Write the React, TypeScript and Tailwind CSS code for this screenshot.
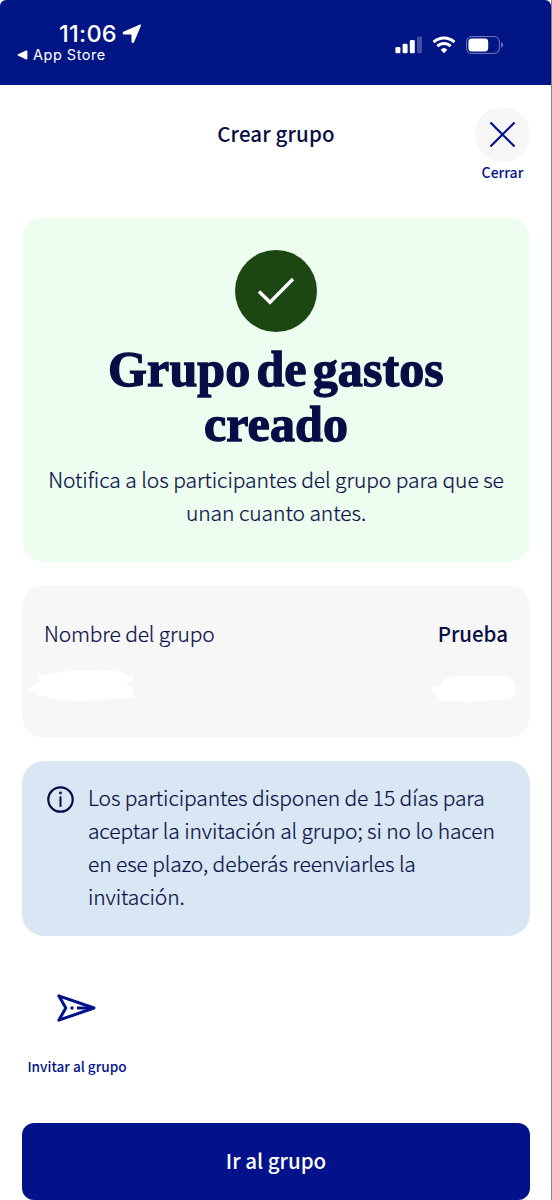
import type { ReactNode } from "react";

function StatusBar() {
    return (
        <div className="flex h-[85px] shrink-0 justify-between rounded-t-[6px] bg-[#021585] font-['Inter',sans-serif] text-white">
            <div className="pt-[21px] pl-[17px]">
                <div className="flex h-[26px] items-center gap-[5px] pl-[42px]">
                    <span className="text-[23.5px] leading-[26px] font-medium tracking-[0.25px]">11:06</span>
                    <svg width="20" height="20" viewBox="0 0 19 19" fill="currentColor" stroke="currentColor" strokeWidth="1.4" strokeLinejoin="round">
                        <path d="M17.4 1.2 1.6 8.1c-.5.3-.3 1.2.3 1.2h7.2c.4 0 .6.2.6.6v6.8c0 .8.8.9 1.1.3Z" />
                    </svg>
                </div>
                <div className="flex h-4 items-center gap-[5px]">
                    <svg width="11" height="10" viewBox="0 0 11 10" fill="currentColor">
                        <path d="M9.2.5.9 4.3c-.6.3-.6 1 0 1.3l8.3 3.8c.6.3 1.2 0 1.2-.6V1.1c0-.6-.6-.9-1.2-.6Z" />
                    </svg>
                    <span className="text-[14.5px] leading-4 tracking-[0.5px]">App Store</span>
                </div>
            </div>

            {/* Signal, wifi, battery */}
            <div className="box-content flex h-[18px] items-center gap-[9px] pt-[36px] pr-[47px]">
                <svg className="-ml-px mr-px" width="28" height="18" viewBox="0 0 28 18" fill="currentColor">
                    <rect x="0.4" y="11" width="5" height="6.3" rx="1.3" />
                    <rect x="7.6" y="7.7" width="5" height="9.6" rx="1.3" />
                    <rect x="14.8" y="4" width="5" height="13.3" rx="1.3" />
                    <rect x="22" y="0.5" width="5" height="16.8" rx="1.3" opacity="0.25" />
                </svg>
                <svg className="-ml-px mr-px" width="24" height="18" viewBox="0 0 24 18" fill="none" stroke="currentColor" strokeWidth="3">
                    <path d="M1.6 6.1a15 15 0 0 1 20.8 0" />
                    <path d="M5.4 10.3a9.4 9.4 0 0 1 13.2 0" />
                    <path d="M12 17.2 8.6 13.7a5 5 0 0 1 6.8 0Z" fill="currentColor" stroke="none" />
                </svg>
                <svg width="38" height="18" viewBox="0 0 38 18" fill="none">
                    <rect x="0.6" y="0.6" width="32.8" height="16.8" rx="5" stroke="#fff" strokeOpacity="0.45" />
                    <rect x="2.4" y="2.5" width="19.8" height="13" rx="3.4" fill="#fff" />
                    <path d="M35.3 6.3c2.2.8 2.2 4.6 0 5.4Z" fill="#fff" fillOpacity="0.5" />
                </svg>
            </div>
        </div>
    );
}

function Card({ className, children }: { className: string; children: ReactNode }) {
    return <section className={`shrink-0 rounded-[22px] ${className}`}>{children}</section>;
}

export default function App() {
    return (
        <div className="h-[1200px] w-[552px] overflow-hidden bg-white font-['Noto_Sans_CJK_SC',sans-serif] text-[#070e46]">
            <div className="flex h-full flex-col border-r border-[#85858b]">
                <StatusBar />

                {/* Header */}
                <header className="grid h-[132px] shrink-0 grid-cols-[1fr_auto_1fr] items-start pt-[22px] pr-[21px] pl-[22px]">
                    <span />
                    <h1 className="pt-[10px] text-[20.5px] leading-8 font-medium tracking-[0.15px]">Crear grupo</h1>
                    <button className="flex w-[55px] flex-col items-center justify-self-end text-[#02128a]">
                        <span className="flex size-[55px] items-center justify-center rounded-full bg-[#f7f7f8]">
                            <svg width="27" height="27" viewBox="0 0 28 28" stroke="currentColor" strokeWidth="2.3">
                                <path d="m1.5 1.5 25 25M26.5 1.5l-25 25" />
                            </svg>
                        </span>
                        <span className="text-[14px] leading-5 font-medium">Cerrar</span>
                    </button>
                </header>

                <main className="flex flex-1 flex-col pr-[21px] pl-[22px]">
                    <Card className="flex h-[345px] flex-col items-center bg-[#edfdf0] pt-[33px] text-center">
                        <div className="flex size-[82px] shrink-0 items-center justify-center rounded-full bg-[#1c4612]">
                            <svg width="38" height="30" viewBox="0 0 38 30" fill="none" stroke="#fff" strokeWidth="3.4">
                                <path d="M2 15.5 13 26.3 36 3" />
                            </svg>
                        </div>
                        <h2 className="pt-[10px] font-['Liberation_Serif',serif] text-[50px] leading-[55px] font-bold tracking-[0.1px] [word-spacing:-6.5px] [-webkit-text-stroke:1.3px_#070e46]">
                            Grupo de gastos
                            <br />
                            creado
                        </h2>
                        <p className="pt-[11px] text-[21px] leading-[33px] font-light tracking-[-0.07px] whitespace-nowrap [-webkit-text-stroke:0.2px]">
                            Notifica a los participantes del grupo para que se
                            <br />
                            unan cuanto antes.
                        </p>
                    </Card>

                    <Card className="mt-[23px] h-[153px] bg-[#f7f7f8] pt-[32px]">
                        <div className="flex justify-between px-[22px] text-[20.5px] leading-[33px]">
                            <span className="text-[21px] font-light tracking-[-0.15px] [-webkit-text-stroke:0.2px]">Nombre del grupo</span>
                            <span className="font-medium">Prueba</span>
                        </div>
                        <div className="flex justify-between pt-[17px] pr-[13px] pl-[3px]">
                            <svg width="112" height="34" viewBox="0 0 112 34" fill="#fff">
                                <path d="M14 8c8 1 15-3 32-4 18-1 38-1 50 1 5 2 3 4 12 4 2 3 0 6-5 7-4 2-2 4 4 3 3 4 3 6-4 8 5-1 8 1 7 4-7 2-17-1-27 1-18 3-42 3-58-1-5-2-7-2-13-2 2-2 3-3 0-4-4-1-8 0-12-1 1-3 10-4 15-10-2-2-3-5-1-6Z" />
                            </svg>
                            <svg className="mt-[3px]" width="86" height="34" viewBox="0 0 86 34" fill="#fff">
                                <path d="M13 10c5-4 13-4 24-4h36c7 0 12 6 12 13 0 10-7 11-17 11-14 1-32 3-43 1-9 0-19 2-19-5 0-3-4-3-5-6 0-4 6-4 9-5Z" />
                            </svg>
                        </div>
                    </Card>

                    <Card className="mt-[23px] flex h-[175px] bg-[#d9e6f4] pt-[20px] pl-[25px]">
                        <svg className="mt-[5px] shrink-0" width="27" height="27" viewBox="0 0 27 27" fill="none" stroke="currentColor">
                            <circle cx="13.5" cy="13.5" r="12.2" strokeWidth="2.2" />
                            <path d="M13.5 10.3v10.6" strokeWidth="2" />
                            <circle cx="13.5" cy="7" r="1.4" fill="currentColor" stroke="none" />
                        </svg>
                        <p className="pl-[14px] text-[21px] leading-[33px] font-light tracking-[-0.12px] whitespace-nowrap [-webkit-text-stroke:0.2px]">
                            Los participantes disponen de 15 días para
                            <br />
                            aceptar la invitación al grupo; si no lo hacen
                            <br />
                            en ese plazo, deberás reenviarles la
                            <br />
                            invitación.
                        </p>
                    </Card>

                    <button className="mt-[57px] flex w-[110px] flex-col items-center text-[#02128a]">
                        <svg className="mr-[2px]" width="40" height="30" viewBox="0 0 40 30" fill="none" stroke="currentColor" strokeWidth="3" strokeLinejoin="round">
                            <path d="M2.8 2.8 38 15 2.8 27.2 9.8 15Z" />
                            <path d="M21 15H37" />
                            <circle cx="16" cy="15" r="1.7" fill="currentColor" stroke="none" />
                        </svg>
                        <span className="pt-[33px] text-[13.6px] leading-5 font-medium whitespace-nowrap">Invitar al grupo</span>
                    </button>

                    <button className="mt-auto h-[77px] shrink-0 rounded-[12px] bg-[#02128a] pb-[3px] text-[20.5px] leading-8 font-medium text-white">
                        Ir al grupo
                    </button>
                </main>
            </div>
        </div>
    );
}
